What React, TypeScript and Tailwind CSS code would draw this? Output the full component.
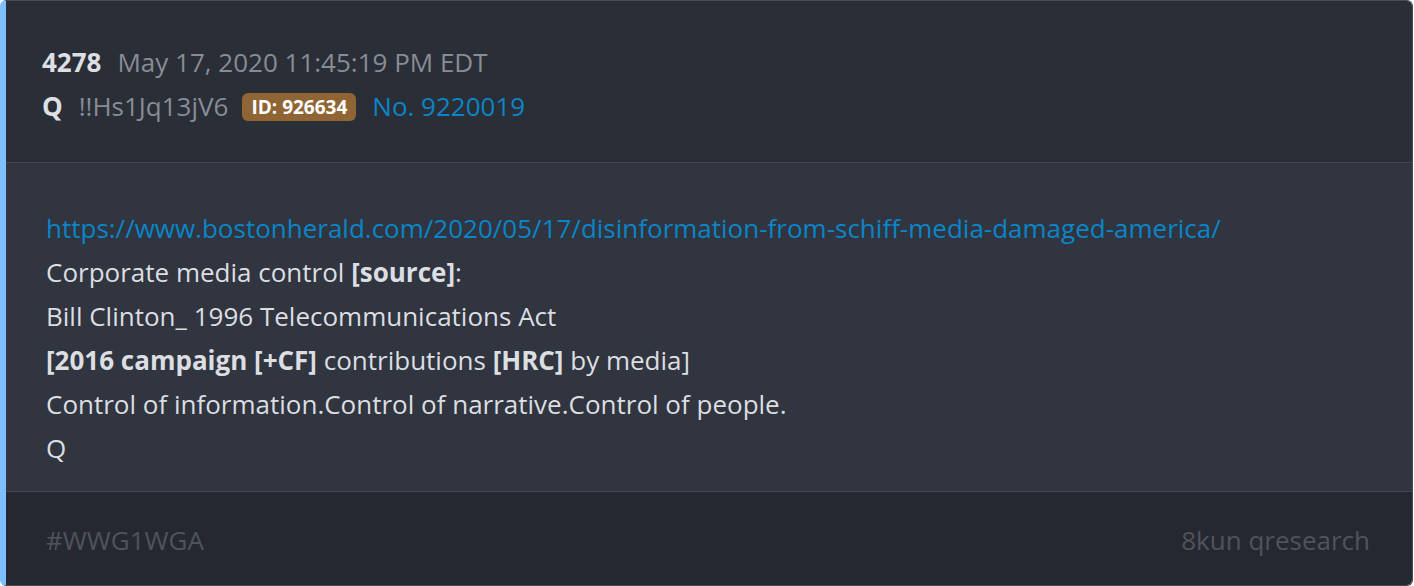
import React from "react";

export default function App() {
  return (
    <div className="w-[1414px] h-[586px] bg-white" style={{ fontFamily: '"Open Sans", sans-serif' }}>
      <div className="w-[1413px] h-[586px] flex flex-col rounded-[6px] overflow-hidden border border-[#474b54] border-l-[6px] border-l-[#80bfff]">
        <div className="bg-[#2a2e37] pl-[36px] pt-[39px] pb-[33px] border-b border-[#43474f] text-[26px]">
          <div className="flex items-center h-[44px] leading-[44px]">
            <span className="font-bold text-[#dddfe2]">4278</span>
            <span className="ml-[16px] text-[#878c96]">May 17, 2020 11:45:19 PM EDT</span>
          </div>
          <div className="flex items-center h-[45px] leading-[45px]">
            <span className="font-bold text-[#dddfe2]">Q</span>
            <span className="ml-[16px] text-[#878c96]">!!Hs1Jq13jV6</span>
            <span className="ml-[14px] bg-[#8f6535] text-white font-bold text-[19px] leading-[28px] px-[9px] rounded-[6px]">ID: 926634</span>
            <span className="ml-[16px] text-[#0a85c8]">No. 9220019</span>
          </div>
        </div>
        <div className="bg-[#30353f] pl-[40px] pt-[43px] pb-[21px] text-[26px] leading-[44px] text-[#dcdee1] border-b border-[#43474f]">
          <div className="text-[#0a85c8]">https://www.bostonherald.com/2020/05/17/disinformation-from-schiff-media-damaged-america/</div>
          <div>Corporate media control <b>[source]</b>:</div>
          <div>Bill Clinton_ 1996 Telecommunications Act</div>
          <div><b>[2016 campaign [+CF]</b> contributions <b>[HRC]</b> by media]</div>
          <div>Control of information.Control of narrative.Control of people.</div>
          <div>Q</div>
        </div>
        <div className="flex-1 bg-[#252831] flex items-center justify-between pl-[40px] pr-[42px] pt-[3px] text-[26px] text-[#4f535d]">
          <span>#WWG1WGA</span>
          <span>8kun qresearch</span>
        </div>
      </div>
    </div>
  );
}
